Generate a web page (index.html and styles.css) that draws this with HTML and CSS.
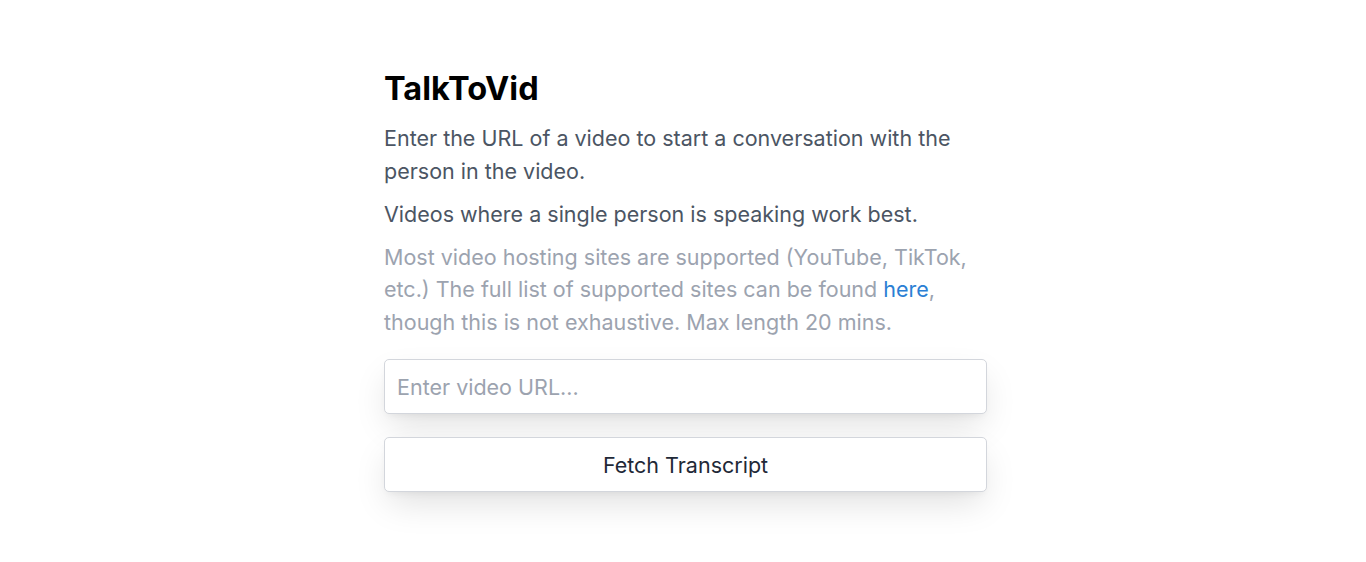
FILE: index.html
```html
<!DOCTYPE html>
<html lang="en">
<head>
<meta charset="utf-8">
<title>TalkToVid</title>
<link rel="stylesheet" href="styles.css">
</head>
<body>
<div class="page">
  <main class="card">
    <h1 class="title">TalkToVid</h1>
    <p class="lead">Enter the URL of a video to start a conversation with the person in the video.</p>
    <p class="lead">Videos where a single person is speaking work best.</p>
    <p class="note">Most video hosting sites are supported (YouTube, TikTok, etc.) The full list of supported sites can be found <a class="link" href="#">here</a>, though this is not exhaustive. Max length 20 mins.</p>
    <form class="form">
      <input class="input" type="text" placeholder="Enter video URL...">
      <button class="button" type="button">Fetch Transcript</button>
    </form>
  </main>
</div>
</body>
</html>
```

FILE: styles.css
```css
html, body {
  margin: 0;
  padding: 0;
  background: #ffffff;
}
body {
  font-family: Inter, "Noto Sans", sans-serif;
  min-height: 100vh;
}
.page {
  display: flex;
  justify-content: center;
  padding: 70px 0 70px 5px;
}
.card {
  width: 603px;
}
.title {
  margin: 0 0 14px 0;
  font-size: 32.5px;
  line-height: 38px;
  font-weight: 700;
  color: #000;
}
.lead, .note {
  margin: 0 0 10.5px 0;
  font-size: 21.5px;
  line-height: 32.5px;
}
.lead {
  color: #4b5563;
}
.note {
  color: #9ca3af;
}
.link {
  color: #2b7fd4;
  text-decoration: none;
}
.form {
  display: flex;
  flex-direction: column;
  gap: 23px;
  margin-top: 21px;
}
.input, .button {
  box-sizing: border-box;
  width: 100%;
  height: 55px;
  border: 1px solid #d3d6dc;
  border-radius: 5px;
  background: #fff;
  font-family: Inter, "Noto Sans", sans-serif;
  font-size: 21.5px;
  box-shadow: 0 15px 35px -5px rgba(0,0,0,0.13), 0 4px 8px -4px rgba(0,0,0,0.08);
}
.input {
  padding: 0 12px;
  color: #111827;
  outline: none;
}
.input::placeholder {
  color: #9ca3af;
}
.button {
  color: #1f2937;
  cursor: pointer;
}
```
